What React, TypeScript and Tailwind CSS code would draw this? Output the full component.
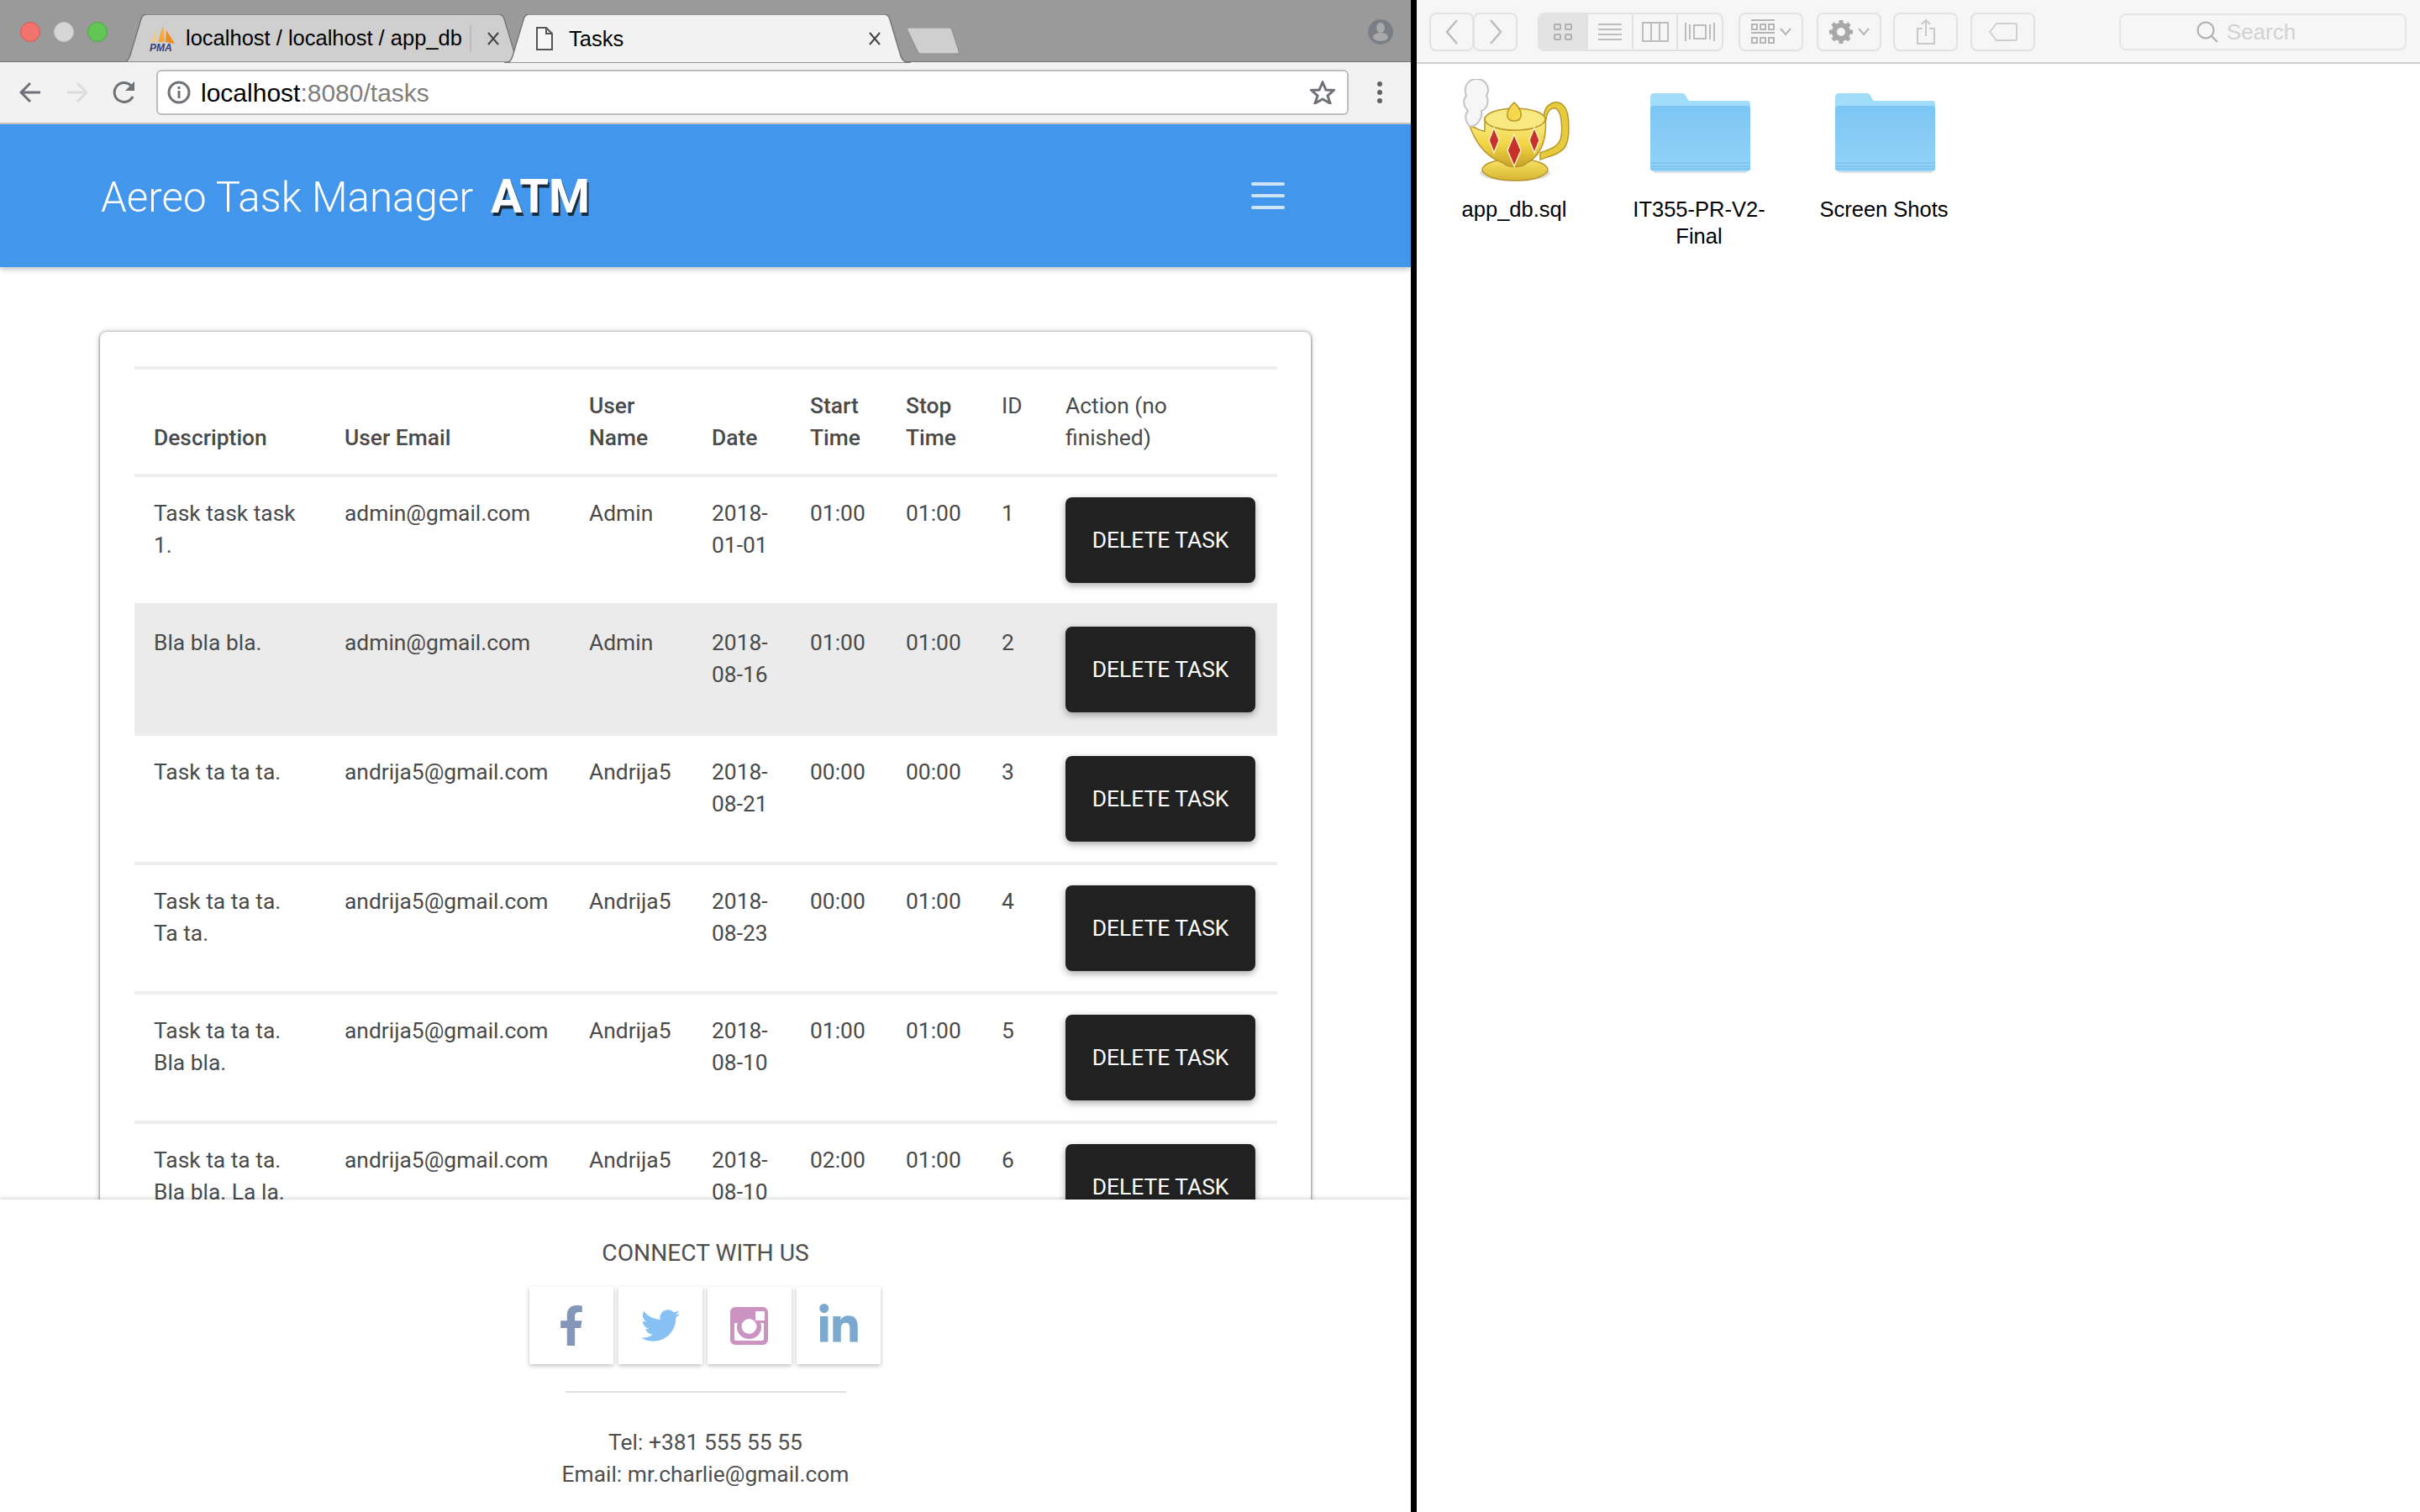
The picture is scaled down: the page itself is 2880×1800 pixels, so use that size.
import React from "react";
import { FaFacebookF, FaTwitter, FaLinkedinIn } from "react-icons/fa";

const tasks = [
  { desc: "Task task task 1.", email: "admin@gmail.com", name: "Admin", date: "2018-01-01", start: "01:00", stop: "01:00", id: 1 },
  { desc: "Bla bla bla.", email: "admin@gmail.com", name: "Admin", date: "2018-08-16", start: "01:00", stop: "01:00", id: 2 },
  { desc: "Task ta ta ta.", email: "andrija5@gmail.com", name: "Andrija5", date: "2018-08-21", start: "00:00", stop: "00:00", id: 3 },
  { desc: "Task ta ta ta. Ta ta.", email: "andrija5@gmail.com", name: "Andrija5", date: "2018-08-23", start: "00:00", stop: "01:00", id: 4 },
  { desc: "Task ta ta ta. Bla bla.", email: "andrija5@gmail.com", name: "Andrija5", date: "2018-08-10", start: "01:00", stop: "01:00", id: 5 },
  { desc: "Task ta ta ta. Bla bla. La la.", email: "andrija5@gmail.com", name: "Andrija5", date: "2018-08-10", start: "02:00", stop: "01:00", id: 6 },
];

const TabShape = ({ fill }: { fill: string }) => (
  <svg className="absolute inset-0" width="100%" height="100%" viewBox="0 0 484 56" preserveAspectRatio="none">
    <path d="M0 56 C6 56 8 54 10 48 L23 6 C24 2 26 0 30 0 L452 0 C456 0 458 2 459 6 L472 48 C474 54 478 56 484 56 Z" fill={fill} stroke="#777" strokeWidth="1.5" />
  </svg>
);

const PmaIcon = () => (
  <svg width="32" height="32" viewBox="0 0 32 32" className="shrink-0">
    <path d="M3 20 L9 5 L9 20 Z" fill="#f9c77b" />
    <path d="M11 20 L17 0 L19 20 Z" fill="#f7a83a" />
    <path d="M20 20 L21 6 L31 22 Z" fill="#f28c1b" />
    <text x="1" y="31" fontSize="12" fontWeight="700" fontStyle="italic" fill="#3b3f7a" fontFamily="Liberation Sans, sans-serif">PMA</text>
  </svg>
);

const BrowserChrome = () => (
  <>
    <div className="flex h-[74px] shrink-0 items-start bg-[#9a9a9a] border-b border-[#777]">
      <div className="ml-[24px] mt-[26px] flex gap-[16px]">
        <span className="h-[24px] w-[24px] rounded-full bg-[#f2736b] border border-[#d9574f]" />
        <span className="h-[24px] w-[24px] rounded-full bg-[#d6d6d6] border border-[#c4c4c4]" />
        <span className="h-[24px] w-[24px] rounded-full bg-[#62c655] border border-[#4ba840]" />
      </div>
      <div className="relative ml-[17px] mt-[17px] h-[57px] w-[480px] font-['Liberation_Sans',sans-serif] text-[25.5px] text-black">
        <TabShape fill="#cfcfcf" />
        <div className="relative flex h-full items-center pl-[32px]">
          <PmaIcon />
          <span className="ml-[12px] w-[330px] whitespace-nowrap">localhost / localhost / app_db</span>
          <span className="ml-[8px] h-[32px] w-[2px] bg-[#bdbdbd]" />
          <svg width="16" height="16" viewBox="0 0 16 16" className="ml-[18px]"><path d="M2 1 L14 15 M14 1 L2 15" stroke="#444" strokeWidth="2" /></svg>
        </div>
      </div>
      <div className="relative ml-[-25px] mt-[17px] h-[58px] w-[484px] font-['Liberation_Sans',sans-serif] text-[25.5px] text-black">
        <TabShape fill="#f2f2f2" />
        <div className="relative flex h-full items-center pl-[38px]">
          <svg width="20" height="28" viewBox="0 0 20 28"><path d="M1 1 H12 L19 8 V27 H1 Z M12 1 V8 H19" fill="#f7f7f7" stroke="#555" strokeWidth="2" /></svg>
          <span className="ml-[19px]">Tasks</span>
          <svg width="16" height="16" viewBox="0 0 16 16" className="ml-[291px]"><path d="M2 1 L14 15 M14 1 L2 15" stroke="#444" strokeWidth="2" /></svg>
        </div>
      </div>
      <svg width="64" height="32" viewBox="0 0 64 32" className="ml-[-5px] mt-[33px]">
        <path d="M4 0 H50 C52 0 53 1 54 3 L62 28 C63 30 62 31 60 31 H17 C15 31 14 30 13 28 L1 3 C0 1 2 0 4 0 Z" fill="#cfcfcf" stroke="#8a8a8a" strokeWidth="1" />
      </svg>
      <svg width="30" height="30" viewBox="0 0 30 30" className="ml-[485px] mt-[23px]">
        <ellipse cx="15" cy="15" rx="15" ry="15" fill="#7a7f85" />
        <ellipse cx="15" cy="10" rx="5" ry="6" fill="#a9a9a9" />
        <ellipse cx="15" cy="21" rx="9" ry="5" fill="#a9a9a9" />
      </svg>
    </div>
    <div className="flex h-[74px] shrink-0 items-center bg-[#f2f2f2] border-b-2 border-[#c6c6c6]">
      <svg width="26" height="26" viewBox="0 0 26 26" className="ml-[23px]"><path d="M25 13 H3 M13 2 L2 13 L13 24" fill="none" stroke="#6e7175" strokeWidth="3" /></svg>
      <svg width="26" height="26" viewBox="0 0 26 26" className="ml-[30px]"><path d="M1 13 H23 M13 2 L24 13 L13 24" fill="none" stroke="#dcdcdc" strokeWidth="3" /></svg>
      <svg width="28" height="28" viewBox="0 0 28 28" className="ml-[29px]"><path d="M24 19 A11.5 11.5 0 1 1 22 6" fill="none" stroke="#6e7175" strokeWidth="3" /><path d="M26 1 V12 H15 Z" fill="#6e7175" /></svg>
      <div className="ml-[24px] flex h-[54px] w-[1419px] items-center rounded-[6px] border-2 border-[#bdbdbd] bg-white pl-[11px] pr-[14px]">
        <svg width="28" height="28" viewBox="0 0 28 28"><circle cx="14" cy="14" r="12" fill="none" stroke="#6e7175" strokeWidth="3" /><path d="M14 12 V21 M14 7 V10" stroke="#6e7175" strokeWidth="3" /></svg>
        <span className="ml-[12px] font-['Liberation_Sans',sans-serif] text-[30px] text-black">localhost<span className="text-[#7f7f7f]">:8080/tasks</span></span>
        <svg width="30" height="28" viewBox="0 0 30 28" className="ml-auto"><path d="M15 2 L19 11 L28 11.5 L21 18 L24 27 L15 22 L6 27 L9 18 L2 11.5 L11 11 Z" fill="none" stroke="#6e7175" strokeWidth="3" /></svg>
      </div>
      <div className="ml-[34px] flex flex-col gap-[4px]">
        <span className="h-[6px] w-[6px] rounded-full bg-[#5f6368]" />
        <span className="h-[6px] w-[6px] rounded-full bg-[#5f6368]" />
        <span className="h-[6px] w-[6px] rounded-full bg-[#5f6368]" />
      </div>
    </div>
  </>
);

const InstagramIcon = () => (
  <svg width="45" height="45" viewBox="0 0 45 45">
    <path fillRule="evenodd" d="M6 0 H39 C42 0 45 3 45 6 V39 C45 42 42 45 39 45 H6 C3 45 0 42 0 39 V6 C0 3 3 0 6 0 Z M30 6 V15 C30 16 31 16 32 16 H39 C40 16 41 16 41 15 V6 C41 5 40 5 39 5 H32 C31 5 30 5 30 6 Z M5 19 V38 C5 39 6 40 7 40 H38 C39 40 40 39 40 38 V19 H36 C37 21 37 22 37 24 A14.5 14 0 0 1 8 24 C8 22 8 21 9 19 Z M22.5 14 A9 9 0 1 0 22.5 32 A9 9 0 1 0 22.5 14 Z" fill="#cb92c2" />
  </svg>
);

const Header = () => (
  <header className="relative z-10 flex h-[170px] shrink-0 items-center bg-[#4296eb] pl-[120px] pr-[150px] shadow-[0_3px_6px_rgba(0,0,0,0.22)]">
    <span className="mt-[5px] text-[49.3px] font-light text-white">Aereo Task Manager</span>
    <span className="ml-[21px] mt-[1px] text-[56px] font-bold text-white [text-shadow:2px_4px_0_#1c2b3c]">ATM</span>
    <div className="ml-auto flex flex-col gap-[10px]">
      <span className="h-[4px] w-[40px] rounded-sm bg-[#cfe4fa]" />
      <span className="h-[4px] w-[40px] rounded-sm bg-[#cfe4fa]" />
      <span className="h-[4px] w-[40px] rounded-sm bg-[#cfe4fa]" />
    </div>
  </header>
);

const TaskTable = () => (
  <div className="ml-[119px] mt-[77px] w-[1441px] rounded-lg bg-white px-[41px] pt-[41px] shadow-[0_1px_3px_rgba(0,0,0,0.6),0_0_6px_rgba(0,0,0,0.3)]">
    <table className="w-[1360px] table-fixed border-separate border-spacing-0 text-left text-[26.4px] leading-[38px] text-[#4a4a4a]">
      <thead>
        <tr className="[&>th]:border-t-4 [&>th]:border-[#eee] [&>th]:px-[23px] [&>th]:py-[24px]">
          <th className="w-[227px] align-bottom font-medium">Description</th>
          <th className="w-[291px] align-bottom font-medium">User Email</th>
          <th className="w-[146px] align-bottom font-medium">User Name</th>
          <th className="w-[117px] align-bottom font-medium">Date</th>
          <th className="w-[114px] align-bottom font-medium">Start Time</th>
          <th className="w-[114px] align-bottom font-medium">Stop Time</th>
          <th className="w-[76px] align-top font-normal">ID</th>
          <th className="w-[275px] align-top font-normal">Action (no<br />finished)</th>
        </tr>
      </thead>
      <tbody>
        {tasks.map((t) => (
          <tr
            key={t.id}
            className={
              t.id === 2
                ? "bg-[#ebebeb] [&>td]:border-t-4 [&>td]:border-[#ebebeb] [&>td]:px-[23px] [&>td]:py-[24px] [&>td]:align-top [&>td]:font-normal"
                : "[&>td]:border-t-4 [&>td]:border-[#eee] [&>td]:px-[23px] [&>td]:py-[24px] [&>td]:align-top [&>td]:font-normal"
            }
          >
            <td>{t.desc}</td>
            <td>{t.email}</td>
            <td>{t.name}</td>
            <td>{t.date}</td>
            <td>{t.start}</td>
            <td>{t.stop}</td>
            <td>{t.id}</td>
            <td>
              <button className="block h-[102px] w-[226px] rounded-[8px] bg-[#212121] text-[26.4px] font-normal text-white shadow-[0_3px_8px_rgba(0,0,0,0.35)]">
                DELETE TASK
              </button>
            </td>
          </tr>
        ))}
      </tbody>
    </table>
  </div>
);

const SocialBox = ({ children }: { children: React.ReactNode }) => (
  <div className="flex h-[92px] w-[100px] items-center justify-center bg-white shadow-[0_2px_5px_rgba(0,0,0,0.25)]">{children}</div>
);

const Footer = () => (
  <footer className="relative z-10 flex h-[372px] shrink-0 flex-col items-center bg-white pt-[48px] text-[#4f4f4f] shadow-[0_-2px_4px_rgba(0,0,0,0.14)]">
    <p className="text-[28.2px] font-normal leading-[32px]">CONNECT WITH US</p>
    <div className="mr-[2px] mt-[24px] flex gap-[6px]">
      <SocialBox><FaFacebookF size={48} color="#8497bb" /></SocialBox>
      <SocialBox><FaTwitter size={46} color="#87c1f3" /></SocialBox>
      <SocialBox><InstagramIcon /></SocialBox>
      <SocialBox><FaLinkedinIn size={52} color="#7aa8ce" /></SocialBox>
    </div>
    <hr className="mt-[32px] h-[2px] w-[334px] border-0 bg-[#e0e0e0]" />
    <p className="mt-[40px] text-center text-[26.4px] font-normal leading-[38px]">
      Tel: +381 555 55 55
      <br />
      Email: mr.charlie@gmail.com
    </p>
  </footer>
);

const ToolButton = ({ className, children }: { className: string; children?: React.ReactNode }) => (
  <div className={"flex h-[46px] items-center justify-center rounded-[8px] border-2 border-[#e2e2e2] " + className}>{children}</div>
);

const Chevron = () => (
  <svg width="14" height="10" viewBox="0 0 14 10" className="ml-[6px]"><path d="M1 1 L7 8 L13 1" fill="none" stroke="#b5b5b5" strokeWidth="2" /></svg>
);

const FinderToolbar = () => (
  <div className="flex h-[76px] shrink-0 items-start border-b-2 border-[#cfcfcf] bg-[#f6f6f6] pt-[15px] pl-[15px]">
    <ToolButton className="w-[53px]">
      <svg width="16" height="30" viewBox="0 0 16 30"><path d="M14 1 L2 15 L14 29" fill="none" stroke="#bdbdbd" strokeWidth="2.5" /></svg>
    </ToolButton>
    <ToolButton className="ml-[-1px] w-[53px]">
      <svg width="16" height="30" viewBox="0 0 16 30"><path d="M2 1 L14 15 L2 29" fill="none" stroke="#bdbdbd" strokeWidth="2.5" /></svg>
    </ToolButton>
    <div className="ml-[24px] flex h-[46px] w-[221px] divide-x-2 divide-[#e2e2e2] overflow-hidden rounded-[8px] border-2 border-[#e2e2e2]">
      <div className="flex w-[58px] items-center justify-center bg-[#e3e3e3]">
        <svg width="22" height="20" viewBox="0 0 22 20" fill="none" stroke="#b0b0b0" strokeWidth="2"><rect x="1" y="1" width="7" height="6" rx="1" /><rect x="14" y="1" width="7" height="6" rx="1" /><rect x="1" y="13" width="7" height="6" rx="1" /><rect x="14" y="13" width="7" height="6" rx="1" /></svg>
      </div>
      <div className="flex w-[54px] items-center justify-center">
        <svg width="30" height="22" viewBox="0 0 30 22" stroke="#bdbdbd" strokeWidth="2"><path d="M1 2 H29 M1 8 H29 M1 14 H29 M1 20 H29" /></svg>
      </div>
      <div className="flex w-[53px] items-center justify-center">
        <svg width="32" height="24" viewBox="0 0 32 24" fill="none" stroke="#bdbdbd" strokeWidth="2"><rect x="1" y="1" width="30" height="22" /><path d="M11 1 V23 M21 1 V23" /></svg>
      </div>
      <div className="flex flex-1 items-center justify-center">
        <svg width="36" height="24" viewBox="0 0 36 24" fill="none" stroke="#bdbdbd" strokeWidth="2"><rect x="11" y="4" width="14" height="16" /><path d="M1 1 V23 M6 3 V21 M30 3 V21 M35 1 V23" /></svg>
      </div>
    </div>
    <ToolButton className="ml-[18px] w-[77px]">
      <svg width="28" height="30" viewBox="0 0 28 30" fill="none" stroke="#b5b5b5" strokeWidth="2"><path d="M0 1 H28 M0 16 H28" /><rect x="1" y="6" width="6" height="6" /><rect x="11" y="6" width="6" height="6" /><rect x="21" y="6" width="6" height="6" /><rect x="1" y="22" width="6" height="6" /><rect x="11" y="22" width="6" height="6" /><rect x="21" y="22" width="6" height="6" /></svg>
      <Chevron />
    </ToolButton>
    <ToolButton className="ml-[16px] w-[77px]">
      <svg width="28" height="28" viewBox="0 0 28 28"><circle cx="14" cy="14" r="8" fill="none" stroke="#a8a8a8" strokeWidth="6" /><path d="M14 0 V28 M0 14 H28 M4 4 L24 24 M24 4 L4 24" stroke="#a8a8a8" strokeWidth="5" strokeDasharray="5 18 5 100" /></svg>
      <Chevron />
    </ToolButton>
    <ToolButton className="ml-[14px] w-[77px]">
      <svg width="22" height="30" viewBox="0 0 22 30" fill="none" stroke="#c9c9c9" strokeWidth="2"><path d="M7 11 H1 V29 H21 V11 H15 M11 20 V2 M6 6 L11 1 L16 6" /></svg>
    </ToolButton>
    <ToolButton className="ml-[15px] w-[77px]">
      <svg width="34" height="22" viewBox="0 0 34 22" fill="none" stroke="#cfcfcf" strokeWidth="2"><path d="M9 1 H31 C32 1 33 2 33 3 V19 C33 20 32 21 31 21 H9 L1 11 Z" /></svg>
    </ToolButton>
    <div className="ml-[100px] mt-[1px] flex h-[44px] w-[342px] items-center justify-center gap-[10px] rounded-[8px] border-2 border-[#e6e6e6] pr-[40px] font-['Liberation_Sans',sans-serif] text-[26px] text-[#d2d2d2]">
      <svg width="26" height="26" viewBox="0 0 26 26" fill="none" stroke="#adadad" strokeWidth="2"><circle cx="11" cy="11" r="9.5" /><path d="M18 18 L25 25" /></svg>
      <span>Search</span>
    </div>
  </div>
);

const LampIcon = () => (
  <svg width="128" height="124" viewBox="0 0 128 124">
    <defs>
      <linearGradient id="lampBody" x1="0" y1="0" x2="0" y2="1">
        <stop offset="0" stopColor="#fdf3a0" />
        <stop offset="0.6" stopColor="#f1d544" />
        <stop offset="1" stopColor="#c9a227" />
      </linearGradient>
      <linearGradient id="lampBase" x1="0" y1="0" x2="0" y2="1">
        <stop offset="0" stopColor="#f8e566" />
        <stop offset="1" stopColor="#d7b430" />
      </linearGradient>
    </defs>
    <ellipse cx="62" cy="112" rx="42" ry="10" fill="#000" opacity="0.12" />
    <path d="M96 44 C98 28 112 24 120 32 C128 40 127 72 122 80 C116 90 102 92 92 96 L92 88 C102 84 112 82 116 72 C119 62 118 42 112 36 C106 32 100 38 99 48 Z" fill="#e8cb3c" stroke="#b8962a" strokeWidth="1.5" />
    <ellipse cx="62" cy="108" rx="39" ry="13" fill="url(#lampBase)" stroke="#b8962a" strokeWidth="1.5" />
    <path d="M8 56 C14 56 18 62 26 62 L26 46 C40 36 84 36 98 46 C100 66 96 90 76 100 C70 106 54 106 48 100 C30 94 16 78 8 56 Z" fill="url(#lampBody)" stroke="#b8962a" strokeWidth="1.5" />
    <ellipse cx="62" cy="48" rx="36" ry="13" fill="#f7e880" stroke="#b8962a" strokeWidth="1.5" />
    <path d="M61 28 C68 34 71 42 68 47 C65 51 57 51 54 47 C51 42 54 34 61 28 Z" fill="#f5d94c" stroke="#b8962a" strokeWidth="1.5" />
    <path d="M37 62 L43 77 L37 92 L31 77 Z M61 70 L69 89 L61 108 L53 89 Z M85 62 L91 77 L85 92 L79 77 Z" transform="translate(0 -4)" fill="#c8302c" stroke="#f8efc0" strokeWidth="1.5" />
    <path d="M8 56 C2 50 2 42 6 38 C0 32 0 24 4 20 C0 10 6 0 16 0 C28 0 33 12 28 20 C32 28 28 36 22 38 C24 46 16 58 8 56 Z" fill="#f6f6f6" stroke="#c4c4c4" strokeWidth="2" />
  </svg>
);

const FolderIcon = () => (
  <svg width="120" height="95" viewBox="0 0 120 95">
    <defs>
      <linearGradient id="folderFront" x1="0" y1="0" x2="0" y2="1">
        <stop offset="0" stopColor="#7cc5f3" />
        <stop offset="1" stopColor="#93d4f8" />
      </linearGradient>
    </defs>
    <path d="M3 92 C1 92 0 91 0 89 V4 C0 2 2 0 4 0 H38 C40 0 41 1 42 3 L45 8 C46 9 47 9 48 9 H116 C118 9 119 11 119 13 V89 C119 91 118 92 116 92 Z" fill="#a2dcfb" />
    <path d="M0 19 C0 16 2 15 4 15 H115 C117 15 119 16 119 19 V88 C119 91 118 93 115 93 H4 C2 93 0 91 0 88 Z" fill="url(#folderFront)" />
    <path d="M0 83 H119 M0 87 H119 M0 90 H119" stroke="#7cc0ee" strokeWidth="1.5" />
    <path d="M4 94 H115" stroke="#000" strokeOpacity="0.14" strokeWidth="1.5" />
  </svg>
);

const FinderItem = ({ icon, label, top }: { icon: React.ReactNode; label: React.ReactNode; top: string }) => (
  <div className="flex w-[220px] flex-col items-center">
    <div className={"flex h-[124px] items-start " + top}>{icon}</div>
    <p className="mt-[16px] text-center font-['Liberation_Sans',sans-serif] text-[25.5px] leading-[32px] text-black">{label}</p>
  </div>
);

const Finder = () => (
  <div className="flex h-[1800px] flex-1 flex-col bg-white">
    <FinderToolbar />
    <div className="flex pl-[6px] pt-[17px]">
      <FinderItem top="ml-[5px] pt-[1px]" icon={<LampIcon />} label="app_db.sql" />
      <FinderItem top="ml-[3px] pt-[18px]" icon={<FolderIcon />} label={<>IT355-PR-V2-<br />Final</>} />
      <FinderItem top="ml-[3px] pt-[18px]" icon={<FolderIcon />} label="Screen Shots" />
    </div>
  </div>
);

export default function App() {
  return (
    <div className="flex h-[1800px] w-[2880px] overflow-hidden bg-white font-['Roboto',sans-serif]">
      <div className="flex h-[1800px] w-[1679px] shrink-0 flex-col">
        <BrowserChrome />
        <Header />
        <main className="min-h-0 flex-1 overflow-hidden bg-white">
          <TaskTable />
        </main>
        <Footer />
      </div>
      <div className="w-[7px] shrink-0 bg-black" />
      <Finder />
    </div>
  );
}
